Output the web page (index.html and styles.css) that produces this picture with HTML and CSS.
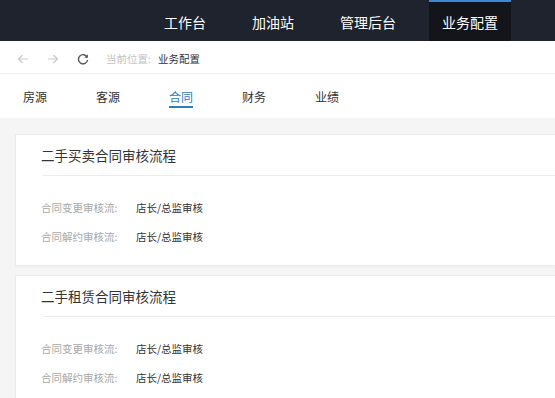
FILE: index.html
```html
<!DOCTYPE html>
<html lang="zh-CN">
  <head>
    <meta charset="UTF-8" />
    <meta name="viewport" content="width=device-width, initial-scale=1.0" />
    <title>业务配置</title>
    <link rel="stylesheet" href="styles.css">
  </head>

  <body>
    <header class="topbar">
      <nav class="topnav">
        <a href="#">工作台</a>
        <a href="#">加油站</a>
        <a href="#">管理后台</a>
        <a href="#" class="active">业务配置</a>
      </nav>
    </header>

    <div class="crumbs">
      <span class="icon">
        <svg width="12" height="10" viewBox="0 0 12 10"><path d="M11 5H1.5M5.5 1L1.5 5l4 4" fill="none" stroke="#c9c9c9" stroke-width="1.2"/></svg>
      </span>
      <span class="icon">
        <svg width="12" height="10" viewBox="0 0 12 10"><path d="M1 5h9.5M6.5 1l4 4-4 4" fill="none" stroke="#c9c9c9" stroke-width="1.2"/></svg>
      </span>
      <span class="icon">
        <svg width="12" height="12" viewBox="0 0 12 12"><path d="M10.2 4.2A4.6 4.6 0 1 0 10.6 7" fill="none" stroke="#555" stroke-width="1.4"/><path d="M10.9 1.2v3.6H7.3z" fill="#555"/></svg>
      </span>
      <span class="crumb-label">当前位置:</span>
      <span class="crumb-value">业务配置</span>
    </div>

    <div class="tabs">
      <a href="#">房源</a>
      <a href="#">客源</a>
      <a href="#" class="active">合同</a>
      <a href="#">财务</a>
      <a href="#">业绩</a>
    </div>

    <div class="main">
      <div class="card">
        <div class="card-title">二手买卖合同审核流程</div>
        <div class="card-body">
          <div class="row"><span class="label">合同变更审核流:</span><span class="value">店长/总监审核</span></div>
          <div class="row"><span class="label">合同解约审核流:</span><span class="value">店长/总监审核</span></div>
        </div>
      </div>

      <div class="card">
        <div class="card-title">二手租赁合同审核流程</div>
        <div class="card-body">
          <div class="row"><span class="label">合同变更审核流:</span><span class="value">店长/总监审核</span></div>
          <div class="row"><span class="label">合同解约审核流:</span><span class="value">店长/总监审核</span></div>
        </div>
      </div>
    </div>
  </body>
</html>
```

FILE: styles.css
```css
body {
    margin: 0;
    padding: 0;
    font-family: "Noto Sans CJK SC", "Noto Sans", sans-serif;
    background-color: #f5f5f5;
    color: #333;
    overflow: hidden;
}

a {
    text-decoration: none;
    color: inherit;
}

.topbar {
    height: 41px;
    background-color: #1f232e;
    display: flex;
    justify-content: flex-end;
    padding-right: 44px;
}

.topnav {
    display: flex;
    gap: 20px;
}

.topnav a {
    display: flex;
    align-items: center;
    padding: 0 13px;
    font-size: 14px;
    color: #fff;
    border-top: 2px solid transparent;
}

.topnav a.active {
    background-color: #13151b;
    border-top-color: #3a86d8;
}

.crumbs {
    box-sizing: border-box;
    height: 33px;
    padding-top: 3px;
    background-color: #fff;
    border-bottom: 1px solid #eee;
    display: flex;
    align-items: center;
    padding-left: 17px;
    font-size: 10.5px;
}

.crumbs .icon {
    display: flex;
    margin-right: 18px;
}

.crumbs .crumb-label {
    color: #c2c2c2;
    margin-left: -1px;
    margin-right: 7px;
}

.crumbs .crumb-value {
    color: #333;
}

.tabs {
    height: 44px;
    background-color: #fff;
    display: flex;
    padding-left: 23px;
    gap: 49px;
}

.tabs a {
    display: flex;
    align-items: center;
    font-size: 12px;
    color: #333;
    position: relative;
}

.tabs a.active {
    color: #2b7dc4;
}

.tabs a.active::after {
    content: "";
    position: absolute;
    left: 0;
    right: 0;
    top: 32px;
    height: 2px;
    background-color: #2b7dc4;
}

.main {
    padding: 16px 0 0 15px;
}

.card {
    background-color: #fff;
    border: 1px solid #ebebeb;
    border-right: none;
    box-shadow: 0 1px 2px rgba(0, 0, 0, 0.04);
    margin-bottom: 9px;
    padding-left: 25px;
}

.card-title {
    font-size: 13.5px;
    color: #333;
    height: 40px;
    line-height: 40px;
    border-bottom: 1px solid #ececec;
    margin-left: 2px;
    text-indent: -2px;
}

.card-body {
    padding: 17px 0 14px;
}

.row {
    display: flex;
    align-items: center;
    height: 29px;
    font-size: 10.5px;
}

.row .label {
    color: #a8a8a8;
    width: 95px;
}

.row .value {
    color: #333;
}
```
